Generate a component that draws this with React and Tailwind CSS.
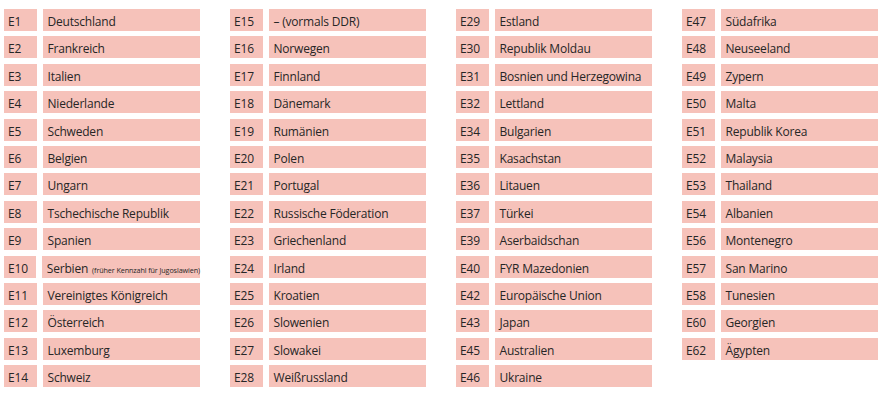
const columns = [
  [
    ["E1", "Deutschland"],
    ["E2", "Frankreich"],
    ["E3", "Italien"],
    ["E4", "Niederlande"],
    ["E5", "Schweden"],
    ["E6", "Belgien"],
    ["E7", "Ungarn"],
    ["E8", "Tschechische Republik"],
    ["E9", "Spanien"],
    ["E10", "Serbien", "(früher Kennzahl für Jugoslawien)"],
    ["E11", "Vereinigtes Königreich"],
    ["E12", "Österreich"],
    ["E13", "Luxemburg"],
    ["E14", "Schweiz"],
  ],
  [
    ["E15", "– (vormals DDR)"],
    ["E16", "Norwegen"],
    ["E17", "Finnland"],
    ["E18", "Dänemark"],
    ["E19", "Rumänien"],
    ["E20", "Polen"],
    ["E21", "Portugal"],
    ["E22", "Russische Föderation"],
    ["E23", "Griechenland"],
    ["E24", "Irland"],
    ["E25", "Kroatien"],
    ["E26", "Slowenien"],
    ["E27", "Slowakei"],
    ["E28", "Weißrussland"],
  ],
  [
    ["E29", "Estland"],
    ["E30", "Republik Moldau"],
    ["E31", "Bosnien und Herzegowina"],
    ["E32", "Lettland"],
    ["E34", "Bulgarien"],
    ["E35", "Kasachstan"],
    ["E36", "Litauen"],
    ["E37", "Türkei"],
    ["E39", "Aserbaidschan"],
    ["E40", "FYR Mazedonien"],
    ["E42", "Europäische Union"],
    ["E43", "Japan"],
    ["E45", "Australien"],
    ["E46", "Ukraine"],
  ],
  [
    ["E47", "Südafrika"],
    ["E48", "Neuseeland"],
    ["E49", "Zypern"],
    ["E50", "Malta"],
    ["E51", "Republik Korea"],
    ["E52", "Malaysia"],
    ["E53", "Thailand"],
    ["E54", "Albanien"],
    ["E56", "Montenegro"],
    ["E57", "San Marino"],
    ["E58", "Tunesien"],
    ["E60", "Georgien"],
    ["E62", "Ägypten"],
  ],
];

const Row = ({ code, name, note }) => (
  <div className="flex h-[22px] gap-[6px]">
    <div className="w-[33px] bg-[#f6c2ba] pl-[4px] pt-[5px] leading-[16px]">{code}</div>
    <div className="flex-1 bg-[#f6c2ba] pl-[4.5px] pt-[5px] leading-[16px] whitespace-nowrap">
      {name}
      {note && <span className="ml-[4px] text-[7.2px] tracking-[-0.1px]">{note}</span>}
    </div>
  </div>
);

const App = () => {
  return (
    <div
      className="w-[886px] h-[400px] bg-white pt-[9px] pl-[4px] flex gap-[30px] text-[12px] tracking-[-0.2px] text-[#262626]"
      style={{ fontFamily: '"Open Sans", "Noto Sans", sans-serif' }}
    >
      {columns.map((col, i) => (
        <div key={i} className="w-[196px] flex flex-col gap-[5.4px]">
          {col.map(([code, name, note]) => (
            <Row key={code} code={code} name={name} note={note} />
          ))}
        </div>
      ))}
    </div>
  );
};

export default App;
